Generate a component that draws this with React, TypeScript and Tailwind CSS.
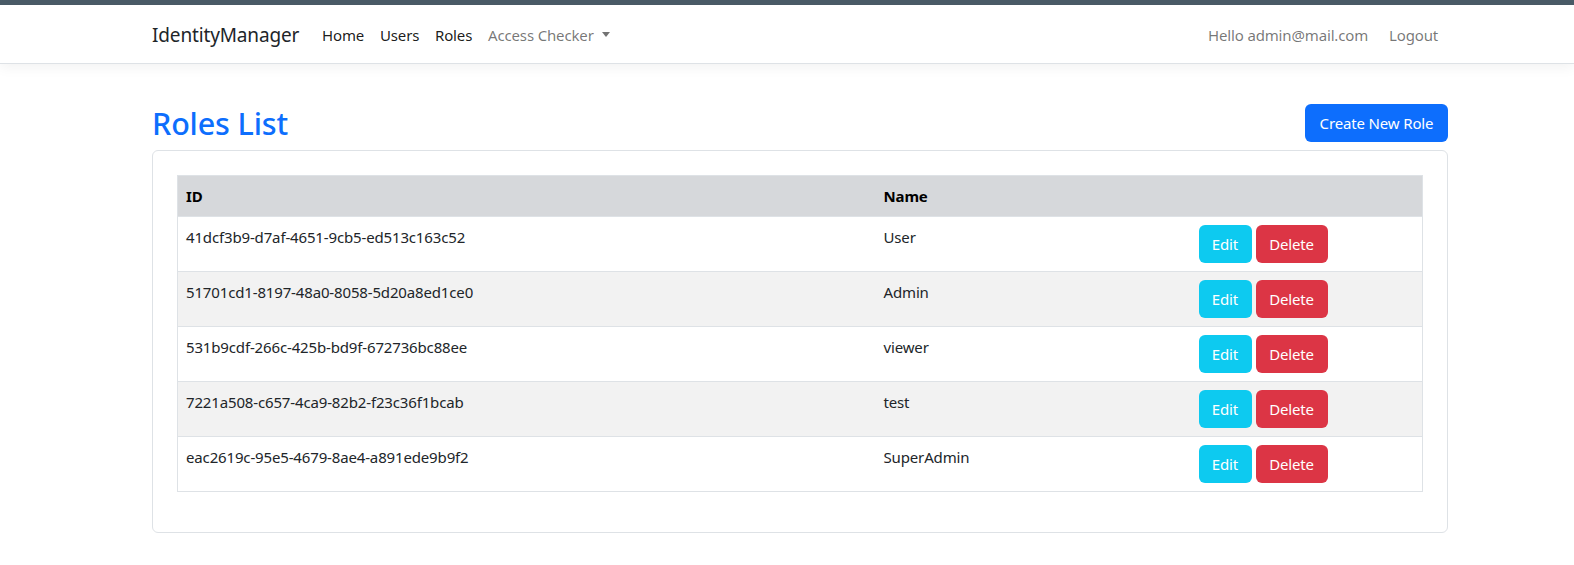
import React from "react";

const roles = [
  { id: "41dcf3b9-d7af-4651-9cb5-ed513c163c52", name: "User" },
  { id: "51701cd1-8197-48a0-8058-5d20a8ed1ce0", name: "Admin" },
  { id: "531b9cdf-266c-425b-bd9f-672736bc88ee", name: "viewer" },
  { id: "7221a508-c657-4ca9-82b2-f23c36f1bcab", name: "test" },
  { id: "eac2619c-95e5-4679-8ae4-a891ede9b9f2", name: "SuperAdmin" },
];

export default function App() {
  return (
    <div
      className="min-h-[565px] bg-white text-[#212529] text-[15px] leading-[24px] tracking-[-0.15px]"
      style={{ fontFamily: '"Noto Sans", "Open Sans", sans-serif' }}
    >
      <div className="h-[5px] bg-[#4a5b67]" />
      <nav className="h-[59px] border-b border-[#dee2e6] bg-white shadow-[0_4px_12px_rgba(0,0,0,0.05)]">
        <div className="ml-[152px] flex h-full w-[1296px] items-center justify-between pt-[1px]">
          <div className="flex items-center">
            <span className="w-[162px] text-[19px] text-[#212529] leading-[30px]">IdentityManager</span>
            <a className="w-[58px] px-[8px] text-[rgba(0,0,0,0.9)]">Home</a>
            <a className="w-[55px] px-[8px] text-[rgba(0,0,0,0.9)]">Users</a>
            <a className="w-[53px] px-[8px] text-[rgba(0,0,0,0.9)]">Roles</a>
            <a className="flex items-center px-[8px] text-[rgba(0,0,0,0.55)]">
              Access Checker
              <span className="ml-[8px] inline-block h-0 w-0 border-x-[4.5px] border-t-[5px] border-x-transparent border-t-[rgba(0,0,0,0.55)]" />
            </a>
          </div>
          <div className="flex items-center pr-[2px]">
            <span className="w-[181px] px-[8px] text-[rgba(0,0,0,0.55)]">Hello admin@mail.com</span>
            <a className="w-[65px] px-[8px] text-[rgba(0,0,0,0.55)]">Logout</a>
          </div>
        </div>
      </nav>
      <main className="ml-[152px] w-[1296px] pt-[40px]">
        <div className="mb-[8px] flex items-center justify-between">
          <h2 className="text-[30.5px] font-medium leading-[38px] text-[#0d6efd]">Roles List</h2>
          <button className="h-[38px] w-[143px] rounded-[6px] bg-[#0d6efd] text-center text-white">Create New Role</button>
        </div>
        <div className="rounded-[6px] border border-[#dee2e6] p-[24px]">
          <table className="mb-[16px] w-full table-fixed border-collapse border border-[#dee2e6]">
            <thead>
              <tr className="bg-[#d6d8db] border-b border-[#dee2e6] text-black">
                <th className="w-[698px] px-[8px] py-[8px] text-left font-bold leading-[24px]">ID</th>
                <th className="w-[315px] px-[8px] py-[8px] text-left font-bold">Name</th>
                <th className="px-[8px] py-[8px]" />
              </tr>
            </thead>
            <tbody>
              {roles.map((r, i) => (
                <tr key={r.id} className={`border-b border-[#dee2e6] ${i % 2 === 1 ? "bg-[#f2f2f2]" : "bg-white"}`}>
                  <td className="px-[8px] py-[8px] align-top">{r.id}</td>
                  <td className="px-[8px] py-[8px] align-top">{r.name}</td>
                  <td className="px-[8px] py-[8px] align-top">
                    <div className="flex gap-[4px]">
                      <button className="h-[38px] w-[53px] rounded-[6px] bg-[#0dcaf0] text-center text-white">Edit</button>
                      <button className="h-[38px] w-[72px] rounded-[6px] bg-[#dc3545] text-center text-white">Delete</button>
                    </div>
                  </td>
                </tr>
              ))}
            </tbody>
          </table>
        </div>
      </main>
    </div>
  );
}
